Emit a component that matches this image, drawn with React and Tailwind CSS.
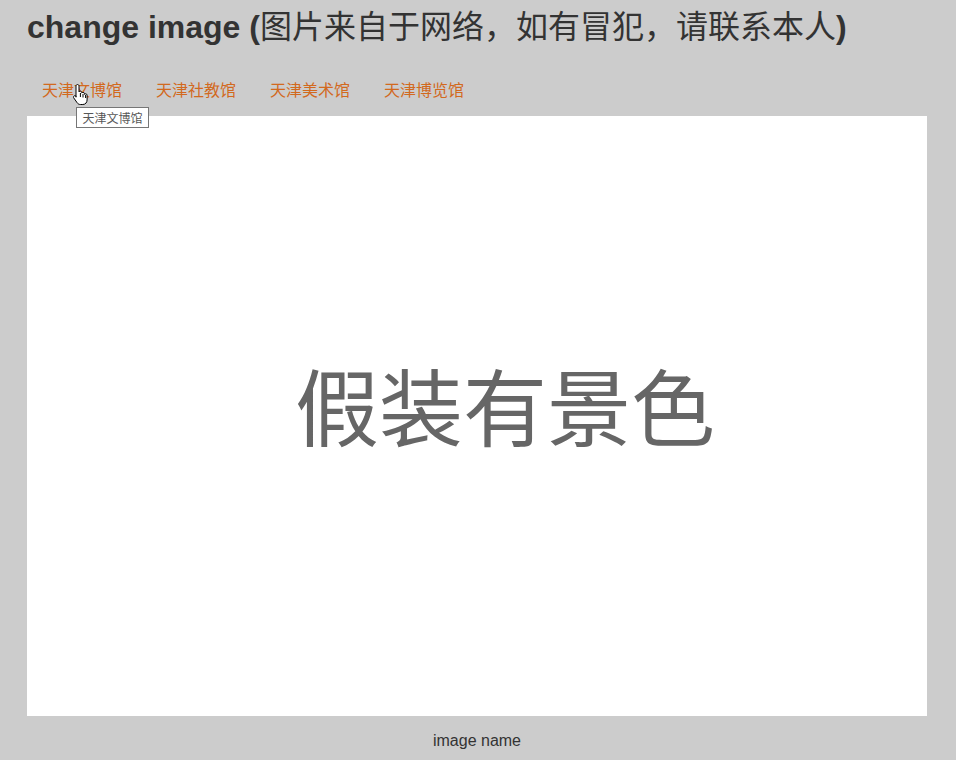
import React from "react";

const links = ["天津文博馆", "天津社教馆", "天津美术馆", "天津博览馆"];

const HandCursor = () => (
  <svg width="18" height="23" viewBox="0 0 18 23" className="absolute left-[72px] top-[83px]">
    <path
      d="M5.5 1.5c.9 0 1.5.7 1.5 1.6V9c.3-.5.8-.8 1.4-.8.8 0 1.4.6 1.4 1.4v.4c.3-.4.8-.6 1.3-.6.8 0 1.4.6 1.4 1.4v.5c.3-.3.7-.5 1.2-.5.8 0 1.4.6 1.4 1.4v4.6c0 2.6-1.6 4.7-4.300 4.7H8.4c-1.4 0-2.4-.6-3.2-1.7l-3.4-4.8c-.5-.7-.4-1.6.3-2.1.6-.4 1.4-.3 1.9.3L4 14.2V3.1c0-.9.6-1.6 1.5-1.6z"
      fill="#fff"
      stroke="#000"
      strokeWidth="1"
    />
    <path d="M8.4 10v4M11 11v3.5M13.6 12v3" stroke="#000" strokeWidth="1" />
  </svg>
);

export default function App() {
  return (
    <div className="relative min-h-[760px] bg-[#cccccc] px-[27px] font-['Liberation_Sans','Noto_Sans_CJK_SC',sans-serif] text-[#333]">
      <h1 className="pt-[6px] text-[32px] leading-[37px] font-bold whitespace-nowrap">
        change image (
        <span className="font-normal font-['Noto_Sans_CJK_SC',serif]">图片来自于网络，如有冒犯，请联系本人</span>)
      </h1>

      <ul className="mt-[34px] flex gap-[4px]">
        {links.map((name) => (
          <li key={name} className="px-[15px] leading-[18px]">
            <a title={name} className="block text-[16px] leading-[18px] text-[#d2691e] font-['Noto_Sans_CJK_SC',sans-serif]">
              {name}
            </a>
          </li>
        ))}
      </ul>

      <div className="mt-[18px] flex h-[600px] w-[900px] items-center justify-center bg-white pl-[56px] pb-[24px]">
        <span className="text-[84px] leading-none text-[#666] font-['Noto_Sans_CJK_SC',sans-serif]">假装有景色</span>
      </div>

      <p className="mt-[16px] w-[900px] text-center text-[16px] leading-[18px] text-[#333]">image name</p>

      <div className="absolute left-[76px] top-[107px] flex h-[21px] w-[73px] items-center justify-center border border-[#767676] bg-white text-[12px] text-[#575757] font-['Noto_Sans_CJK_SC',sans-serif]">
        天津文博馆
      </div>
      <HandCursor />
    </div>
  );
}
